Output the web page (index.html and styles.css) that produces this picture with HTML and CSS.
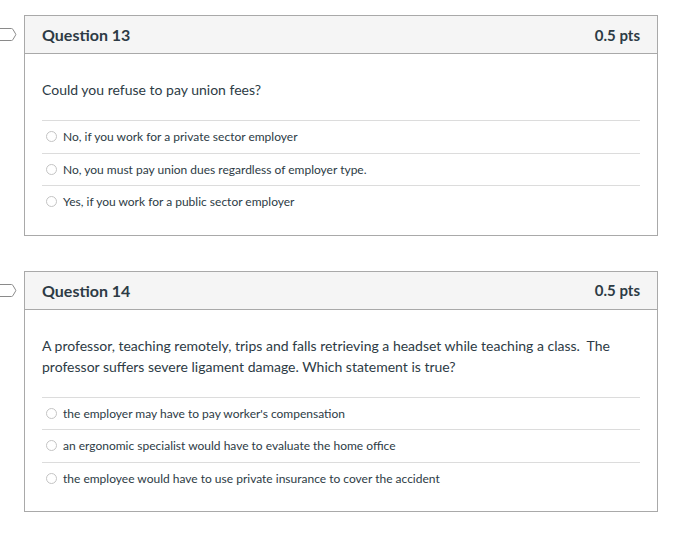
FILE: index.html
```html
<!DOCTYPE html>
<html>
<head>
<meta charset="utf-8">
<link rel="stylesheet" href="styles.css">
</head>
<body>
<div class="quiz">
  <div class="question">
    <div class="flag">
      <svg width="17" height="14" viewBox="0 0 17 14"><path d="M-1 0.5 H11.5 Q12.3 0.5 12.8 1.2 L15.6 5.9 Q16 6.5 15.6 7.1 L12.8 11.8 Q12.3 12.5 11.5 12.5 H-1" fill="#fff" stroke="#8a8a8a" stroke-width="1"/></svg>
    </div>
    <div class="card">
      <div class="card-header">
        <span class="q-title">Question 13</span>
        <span class="q-pts">0.5 pts</span>
      </div>
      <div class="card-body">
        <p class="q-text">Could you refuse to pay union fees?</p>
        <div class="answers">
          <div class="answer"><span class="radio"></span><span>No, if you work for a private sector employer</span></div>
          <div class="answer"><span class="radio"></span><span>No, you must pay union dues regardless of employer type.</span></div>
          <div class="answer"><span class="radio"></span><span>Yes, if you work for a public sector employer</span></div>
        </div>
      </div>
    </div>
  </div>
  <div class="question">
    <div class="flag">
      <svg width="17" height="14" viewBox="0 0 17 14"><path d="M-1 0.5 H11.5 Q12.3 0.5 12.8 1.2 L15.6 5.9 Q16 6.5 15.6 7.1 L12.8 11.8 Q12.3 12.5 11.5 12.5 H-1" fill="#fff" stroke="#8a8a8a" stroke-width="1"/></svg>
    </div>
    <div class="card">
      <div class="card-header">
        <span class="q-title">Question 14</span>
        <span class="q-pts">0.5 pts</span>
      </div>
      <div class="card-body">
        <p class="q-text">A professor, teaching remotely, trips and falls retrieving a headset while teaching a class.&nbsp; The professor suffers severe ligament damage. Which statement is true?</p>
        <div class="answers">
          <div class="answer"><span class="radio"></span><span>the employer may have to pay worker's compensation</span></div>
          <div class="answer"><span class="radio"></span><span>an ergonomic specialist would have to evaluate the home office</span></div>
          <div class="answer"><span class="radio"></span><span>the employee would have to use private insurance to cover the accident</span></div>
        </div>
      </div>
    </div>
  </div>
</div>
</body>
</html>
```

FILE: styles.css
```css
html, body {
  margin: 0;
  padding: 0;
  background: #fff;
}
body {
  font-family: Lato, "Open Sans", sans-serif;
  color: #2d3b45;
}
.quiz {
  padding-top: 15px;
  display: flex;
  flex-direction: column;
  gap: 35px;
}
.question {
  display: flex;
  align-items: flex-start;
}
.flag {
  width: 24px;
  flex: none;
  padding-top: 13px;
}
.flag svg {
  display: block;
}
.card {
  width: 632px;
  border: 1px solid #a9a9a9;
}
.card-header {
  height: 37px;
  background: #f5f5f5;
  border-bottom: 1px solid #a9a9a9;
  display: flex;
  align-items: center;
  justify-content: space-between;
  padding: 0 17px;
}
.q-title {
  font-weight: 700;
  font-size: 16px;
}
.q-pts {
  font-weight: 700;
  font-size: 15px;
}
.card-body {
  padding: 25px 17px 17px;
}
.q-text {
  margin: 0 0 20px;
  font-size: 14px;
  line-height: 21px;
}
.answer {
  border-top: 1px solid #dcdcdc;
  height: 31.5px;
  display: flex;
  align-items: center;
  font-size: 12px;
  padding-left: 4px;
  gap: 6px;
}
.radio {
  width: 9px;
  height: 9px;
  border: 1px solid #c4c4c4;
  border-radius: 50%;
  flex: none;
  background: #fff;
}
```
